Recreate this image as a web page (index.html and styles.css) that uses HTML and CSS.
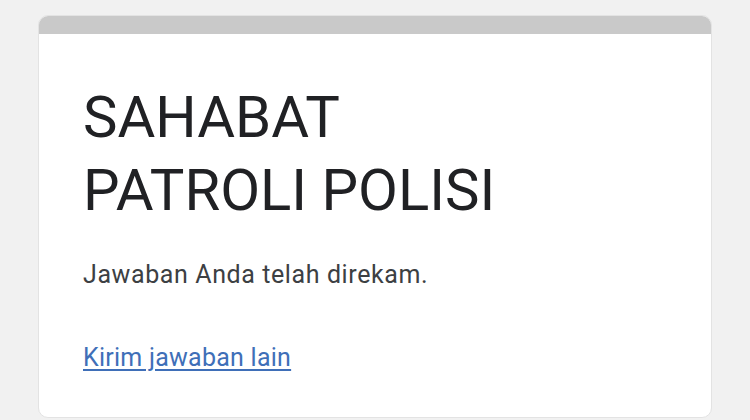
FILE: index.html
```html
<!DOCTYPE html>
<html lang="id">
<head>
<meta charset="utf-8">
<title>SAHABAT PATROLI POLISI</title>
<link rel="stylesheet" href="styles.css">
</head>
<body>
<main class="page">
  <section class="card">
    <div class="card-bar"></div>
    <div class="card-body">
      <h1 class="title">SAHABAT<br>PATROLI POLISI</h1>
      <p class="message">Jawaban Anda telah direkam.</p>
      <a class="link" href="#">Kirim jawaban lain</a>
    </div>
  </section>
</main>
</body>
</html>
```

FILE: styles.css
```css
html, body {
  margin: 0;
  padding: 0;
  background: #f1f1f1;
  font-family: Roboto, "Liberation Sans", Arial, sans-serif;
}

.page {
  padding: 15px 38px 0;
}

.card {
  box-sizing: border-box;
  height: 403px;
  background: #ffffff;
  border: 1px solid #e3e3e3;
  border-radius: 10px;
  overflow: hidden;
  display: flex;
  flex-direction: column;
}

.card-bar {
  height: 18px;
  background: #c9c9c9;
  flex: none;
}

.card-body {
  padding: 47px 44px 0;
}

.title {
  margin: 0;
  font-size: 58px;
  line-height: 73px;
  font-weight: 400;
  color: #202124;
}

.message {
  margin: 33px 0 0;
  font-size: 25px;
  line-height: 30px;
  color: #3c4043;
  letter-spacing: 0.6px;
}

.link {
  display: inline-block;
  margin-top: 53px;
  font-size: 25px;
  line-height: 30px;
  color: #3f6fb8;
  text-decoration: underline;
  text-underline-offset: 3px;
  letter-spacing: 0.25px;
}
```
